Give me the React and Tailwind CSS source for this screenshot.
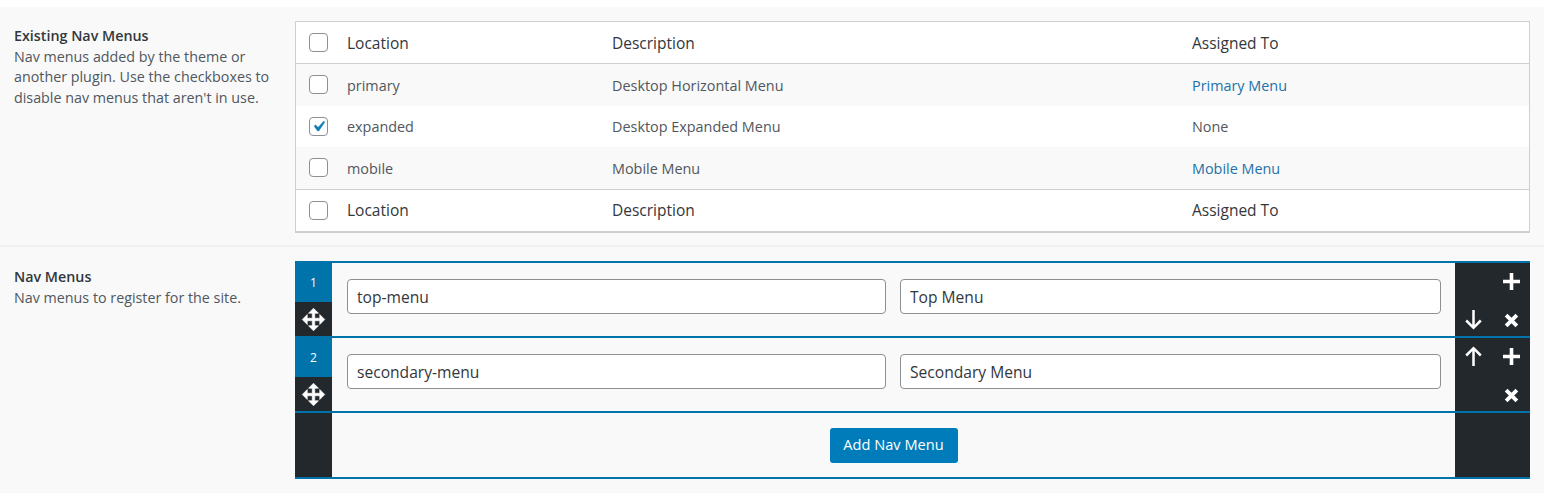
import React from 'react';

const font = "font-['Open_Sans','Noto_Sans',sans-serif]";

const Check = ({ checked }) => (
  <span className="w-[19px] h-[19px] shrink-0 bg-white border border-[#8c8f94] rounded-[4px] flex items-center justify-center">
    {checked && (
      <svg width="21" height="21" viewBox="0 0 20 20" className="shrink-0">
        <path d="M14.83 4.89l1.34.94-5.81 8.38H9.02L5.78 9.67l1.34-1.25 2.57 2.4z" fill="#1380b3" stroke="#1380b3" strokeWidth="0.3" />
      </svg>
    )}
  </span>
);

const HeadRow = ({ border }) => (
  <div className={`flex items-center h-[42px] bg-white text-[15.5px] text-[#32373c] ${border}`}>
    <div className="w-[51px] pl-[13px] flex items-center"><Check /></div>
    <div className="w-[265px] pt-[2px]">Location</div>
    <div className="w-[580px] pt-[2px]">Description</div>
    <div className="pt-[2px]">Assigned To</div>
  </div>
);

const Row = ({ name, desc, assigned, link, checked, alt }) => (
  <div className={`flex items-center h-[41.5px] text-[14.4px] text-[#50575e] ${alt ? 'bg-[#f9f9f9]' : 'bg-white'}`}>
    <div className="w-[51px] pl-[13px] flex items-center"><Check checked={checked} /></div>
    <div className="w-[265px] pt-[2px]">{name}</div>
    <div className="w-[580px] pt-[2px]">{desc}</div>
    <div className={link ? 'text-[#2271a8] pt-[2px]' : 'pt-[2px]'}>{assigned}</div>
  </div>
);

const MoveIcon = () => (
  <svg width="25" height="25" viewBox="0 0 20 20" fill="#fff" stroke="#fff" strokeWidth="0.5">
    <path d="M19 10l-4 4v-3h-4v4h3l-4 4-4-4h3v-4H5v3l-4-4 4-4v3h4V5H6l4-4 4 4h-3v4h4V6z" />
  </svg>
);

const Plus = () => (
  <svg width="17" height="17" viewBox="0 0 17 17"><path d="M8.500 0v17M0 8.500h17" stroke="#fff" strokeWidth="3.600" /></svg>
);
const Cross = () => (
  <svg width="15" height="15" viewBox="0 0 14 14"><path d="M2 2l10 10M12 2L2 12" stroke="#fff" strokeWidth="3.600" /></svg>
);
const ArrowDown = () => (
  <svg width="17" height="20" viewBox="0 0 17 20" fill="none"><path d="M8.500 0v18M1.200 10.500l7.300 7.300 7.300-7.300" stroke="#fff" strokeWidth="2.500" /></svg>
);
const ArrowUp = () => (
  <svg width="17" height="20" viewBox="0 0 17 20" fill="none"><path d="M8.500 20V2M1.200 9.500l7.300-7.300 7.300 7.300" stroke="#fff" strokeWidth="2.500" /></svg>
);

const Field = ({ value, className }) => (
  <input
    readOnly
    value={value}
    className={`min-w-0 h-[35px] bg-white border border-[#8c8f94] rounded-[4px] px-[9px] text-[15.6px] text-[#32373c] outline-none ${className}`}
  />
);

const NavRow = ({ n, slug, label, up, down }) => (
  <div className="flex h-[75px] border-t-2 border-[#0073aa]">
    <div className="w-[37px] flex flex-col bg-[#23282d]">
      <div className="h-[39px] bg-[#0073aa] text-white text-[12px] flex items-center justify-center">{n}</div>
      <div className="flex-1 flex items-center justify-center"><MoveIcon /></div>
    </div>
    <div className="flex-1 flex gap-[14px] pl-[15px] pr-[14px] pt-[16px] bg-[#f9f9f9]">
      <Field value={slug} className="w-[539px]" />
      <Field value={label} className="flex-1" />
    </div>
    <div className="w-[75px] bg-[#23282d] grid grid-cols-2 grid-rows-[34px_34px] gap-y-[5px] pt-[1px]">
      <div className="flex items-center justify-center">{up && <ArrowUp />}</div>
      <div className="flex items-center justify-center"><Plus /></div>
      <div className="flex items-center justify-center">{down && <ArrowDown />}</div>
      <div className="flex items-center justify-center"><Cross /></div>
    </div>
  </div>
);

export default function App() {
  return (
    <div className={`${font} w-[1544px] h-[500px] bg-white pt-[7px] overflow-hidden`}>
      <div className="flex bg-[#f9f9f9] h-[240px] border-b-2 border-[#f0f0f0] pt-[14px] pr-[14px]">
        <div className="w-[295px] pl-[14px] pt-[5px] text-[14.3px] leading-[20.500px] text-[#50575e] shrink-0">
          <div className="font-semibold text-[#32373c]">Existing Nav Menus</div>
          <div className="w-[265px]">Nav menus added by the theme or another plugin. Use the checkboxes to disable nav menus that aren't in use.</div>
        </div>
        <div className="flex-1 h-[212px] border border-[#ccd0d4] border-b-2">
          <HeadRow border="border-b border-[#ccd0d4]" />
          <Row name="primary" desc="Desktop Horizontal Menu" assigned="Primary Menu" link alt />
          <Row name="expanded" desc="Desktop Expanded Menu" assigned="None" checked />
          <Row name="mobile" desc="Mobile Menu" assigned="Mobile Menu" link alt />
          <HeadRow border="border-t border-[#ccd0d4]" />
        </div>
      </div>
      <div className="flex bg-[#f9f9f9] h-[246px] pt-[14px] pr-[14px]">
        <div className="w-[295px] pl-[14px] pt-[6px] text-[14.3px] leading-[20.500px] text-[#50575e] shrink-0">
          <div className="font-semibold text-[#32373c]">Nav Menus</div>
          <div>Nav menus to register for the site.</div>
        </div>
        <div className="flex-1">
          <NavRow n="1" slug="top-menu" label="Top Menu" down />
          <NavRow n="2" slug="secondary-menu" label="Secondary Menu" up />
          <div className="flex h-[68px] border-y-2 border-[#0073aa]">
            <div className="w-[37px] bg-[#23282d]" />
            <div className="flex-1 flex items-center justify-center bg-[#f9f9f9]">
              <button className="h-[35px] w-[128px] rounded-[3px] bg-[#007cba] text-white text-[14.600px]">Add Nav Menu</button>
            </div>
            <div className="w-[75px] bg-[#23282d]" />
          </div>
        </div>
      </div>
    </div>
  );
}
